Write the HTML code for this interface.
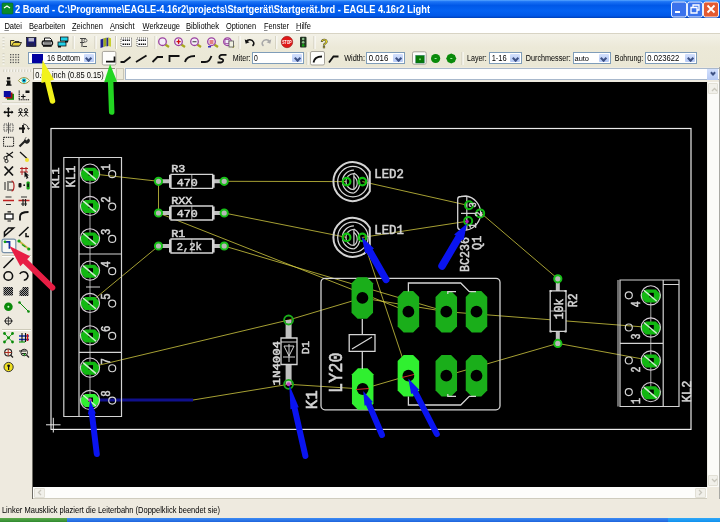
<!DOCTYPE html>
<html><head><meta charset="utf-8">
<style>
*{box-sizing:border-box}
html,body{margin:0;padding:0}
body{width:720px;height:522px;overflow:hidden;position:relative;background:#EEEADF;font-family:"Liberation Sans",sans-serif}
.a{position:absolute}
.dd{position:absolute;background:#fff;border:1px solid #7F9DB9}
.dd .ar{position:absolute;right:1px;top:1px;bottom:1px;width:10px;background:linear-gradient(#D3E0FD,#B5C9F5);border-radius:1px}
.dd .ar:after{content:"";position:absolute;left:2.6px;top:2px;width:3.2px;height:3.2px;border-right:2px solid #3E5286;border-bottom:2px solid #3E5286;transform:rotate(45deg)}
</style></head><body>
<div class="a" style="left:0;top:0;width:720px;height:18.3px;background:linear-gradient(#5AA8FF 0%,#1C74F6 9%,#0058E8 30%,#0462F2 60%,#0058E8 88%,#0040B8 100%)"></div>
<div class="a" style="left:0;top:18.3px;width:720px;height:15.6px;background:#FFFFFF;border-bottom:1px solid #D8D4C4"></div>
<div class="a" style="left:0;top:34px;width:720px;height:33px;background:linear-gradient(#F3F1E7,#ECE9D8 40%,#EAE7D5)"></div>
<div class="dd" style="left:28px;top:51.7px;width:67.6px;height:12.799999999999997px"><div class="ar"></div></div>
<div class="a" style="left:32px;top:53.8px;width:11px;height:9px;background:#0000A0"></div>
<div class="dd" style="left:251.9px;top:51.7px;width:52.099999999999994px;height:12.799999999999997px"><div class="ar"></div></div>
<div class="dd" style="left:366.3px;top:51.7px;width:39.0px;height:12.799999999999997px"><div class="ar"></div></div>
<div class="dd" style="left:488.7px;top:51.7px;width:33.80000000000001px;height:12.799999999999997px"><div class="ar"></div></div>
<div class="dd" style="left:572.5px;top:51.7px;width:38.10000000000002px;height:12.799999999999997px"><div class="ar"></div></div>
<div class="dd" style="left:644.9px;top:51.7px;width:52.39999999999998px;height:12.799999999999997px"><div class="ar"></div></div>
<!-- coordinate row -->
<div class="a" style="left:32.5px;top:67.8px;width:82.5px;height:12.7px;background:#F6F5EF;border-top:1px solid #8E8B7E;border-left:1px solid #8E8B7E;border-bottom:1px solid #fff"></div>
<div class="a" style="left:115.8px;top:67.8px;width:8.4px;height:12.7px;background:#ECE9D8;border:1px solid #C8C5B5"></div>
<div class="a" style="left:125px;top:67.8px;width:595px;height:12.7px;background:#fff;border:1px solid #A8B8CC"></div>
<div class="a" style="left:707px;top:68.5px;width:11px;height:11px;background:linear-gradient(#D3E0FD,#B5C9F5)"></div>
<div class="a" style="left:710.5px;top:71px;width:4px;height:4px;border-right:2px solid #3E5286;border-bottom:2px solid #3E5286;transform:rotate(45deg)"></div>
<!-- canvas -->
<div class="a" style="left:33px;top:81.8px;width:674px;height:404.8px;background:#000"></div>
<div class="a" style="left:31.5px;top:81.8px;width:1.5px;height:417px;background:#6E6C64"></div>
<!-- v scrollbar -->
<div class="a" style="left:707px;top:81.8px;width:11.5px;height:404.8px;background:#FBFBF8;border-left:1px solid #EEEDE6"></div>
<div class="a" style="left:708px;top:82.5px;width:10px;height:11px;background:#F1F0EA;border:1px solid #E2E0D6;border-radius:1px"></div>
<div class="a" style="left:708px;top:475px;width:10px;height:11px;background:#F1F0EA;border:1px solid #E2E0D6;border-radius:1px"></div>
<!-- h scrollbar -->

<div class="a" style="left:33px;top:486.6px;width:674px;height:12px;background:#FDFDFB;border-bottom:1px solid #CFCCBE"></div>
<div class="a" style="left:34px;top:487.5px;width:11px;height:10px;background:#F1F0EA;border:1px solid #E2E0D6;border-radius:1px"></div>
<div class="a" style="left:695px;top:487.5px;width:11px;height:10px;background:#F1F0EA;border:1px solid #E2E0D6;border-radius:1px"></div>
<div class="a" style="left:718.6px;top:67px;width:1.4px;height:432px;background:#A9A9A4"></div>
<!-- taskbar -->
<div class="a" style="left:0;top:518.3px;width:67px;height:4px;background:linear-gradient(#5DAA4C,#2E8A2E)"></div>
<div class="a" style="left:67px;top:518.3px;width:601px;height:4px;background:linear-gradient(#3C8CF4,#1E64DC)"></div>
<div class="a" style="left:668px;top:518.3px;width:52px;height:4px;background:linear-gradient(#30A8F8,#1090EE)"></div>
<svg class="a" style="left:0;top:0;will-change:transform" width="720" height="522" viewBox="0 0 720 522">
<defs><clipPath id="cv"><rect x="33" y="81.8" width="674" height="404.8"/></clipPath></defs>
<text x="15" y="12.6" font-family="Liberation Sans" font-size="10.00" font-weight="bold" fill="#fff" textLength="415" lengthAdjust="spacingAndGlyphs">2 Board - C:\Programme\EAGLE-4.16r2\projects\Startgerät\Startgerät.brd - EAGLE 4.16r2 Light</text>
<rect x="2" y="3" width="11" height="11" rx="1" fill="#0A8A2A" stroke="#063" stroke-width="0.6"/><path d="M4 8L7 6L10 8" stroke="#fff" stroke-width="1.2" fill="none"/>
<rect x="671.5" y="2" width="15" height="15" rx="2" fill="#3A72EC" stroke="#fff" stroke-width="0.9"/>
<rect x="675.0" y="11" width="5" height="2" fill="#fff"/>
<rect x="687.5" y="2" width="15" height="15" rx="2" fill="#3A72EC" stroke="#fff" stroke-width="0.9"/>
<path d="M693.0 7V5h6v5h-2M691.0 7.5h6v5.5h-6z" fill="none" stroke="#fff" stroke-width="1.3"/>
<rect x="703.5" y="2" width="15" height="15" rx="2" fill="#E35A32" stroke="#fff" stroke-width="0.9"/>
<path d="M707.5 5.5L714.5 12.5M714.5 5.5L707.5 12.5" stroke="#fff" stroke-width="1.8"/>
<text x="4.4" y="28.7" font-family="Liberation Sans" font-size="8.26" font-weight="normal" fill="#000" textLength="17.6" lengthAdjust="spacingAndGlyphs">Datei</text>
<text x="29" y="28.7" font-family="Liberation Sans" font-size="8.26" font-weight="normal" fill="#000" textLength="36.5" lengthAdjust="spacingAndGlyphs">Bearbeiten</text>
<text x="72" y="28.7" font-family="Liberation Sans" font-size="8.26" font-weight="normal" fill="#000" textLength="31" lengthAdjust="spacingAndGlyphs">Zeichnen</text>
<text x="110" y="28.7" font-family="Liberation Sans" font-size="8.26" font-weight="normal" fill="#000" textLength="24.5" lengthAdjust="spacingAndGlyphs">Ansicht</text>
<text x="142.5" y="28.7" font-family="Liberation Sans" font-size="8.26" font-weight="normal" fill="#000" textLength="37.5" lengthAdjust="spacingAndGlyphs">Werkzeuge</text>
<text x="186" y="28.7" font-family="Liberation Sans" font-size="8.26" font-weight="normal" fill="#000" textLength="33" lengthAdjust="spacingAndGlyphs">Bibliothek</text>
<text x="226" y="28.7" font-family="Liberation Sans" font-size="8.26" font-weight="normal" fill="#000" textLength="30" lengthAdjust="spacingAndGlyphs">Optionen</text>
<text x="264" y="28.7" font-family="Liberation Sans" font-size="8.26" font-weight="normal" fill="#000" textLength="25" lengthAdjust="spacingAndGlyphs">Fenster</text>
<text x="296" y="28.7" font-family="Liberation Sans" font-size="8.26" font-weight="normal" fill="#000" textLength="15" lengthAdjust="spacingAndGlyphs">Hilfe</text>
<rect x="4.4" y="30" width="4.5" height="0.7" fill="#555"/>
<rect x="33" y="30" width="3.6" height="0.7" fill="#555"/>
<rect x="72" y="30" width="4.2" height="0.7" fill="#555"/>
<rect x="110" y="30" width="4.2" height="0.7" fill="#555"/>
<rect x="142.5" y="30" width="6" height="0.7" fill="#555"/>
<rect x="186" y="30" width="4" height="0.7" fill="#555"/>
<rect x="226" y="30" width="4.5" height="0.7" fill="#555"/>
<rect x="264" y="30" width="3.5" height="0.7" fill="#555"/>
<rect x="296" y="30" width="4" height="0.7" fill="#555"/>
<text x="232.75" y="61.1" font-family="Liberation Sans" font-size="8.41" font-weight="normal" fill="#000" textLength="17.8" lengthAdjust="spacingAndGlyphs">Miter:</text>
<text x="344.2" y="61.3" font-family="Liberation Sans" font-size="8.41" font-weight="normal" fill="#000" textLength="20.8" lengthAdjust="spacingAndGlyphs">Width:</text>
<text x="467" y="61.3" font-family="Liberation Sans" font-size="8.41" font-weight="normal" fill="#000" textLength="19.7" lengthAdjust="spacingAndGlyphs">Layer:</text>
<text x="525.8" y="61.3" font-family="Liberation Sans" font-size="8.41" font-weight="normal" fill="#000" textLength="45" lengthAdjust="spacingAndGlyphs">Durchmesser:</text>
<text x="614.8" y="61.3" font-family="Liberation Sans" font-size="8.41" font-weight="normal" fill="#000" textLength="28.3" lengthAdjust="spacingAndGlyphs">Bohrung:</text>
<text x="46.9" y="61.1" font-family="Liberation Sans" font-size="9.13" font-weight="normal" fill="#000" textLength="33.3" lengthAdjust="spacingAndGlyphs">16 Bottom</text>
<text x="254" y="61.1" font-family="Liberation Sans" font-size="8.99" font-weight="normal" fill="#000" textLength="3.8" lengthAdjust="spacingAndGlyphs">0</text>
<text x="368.7" y="61.1" font-family="Liberation Sans" font-size="8.99" font-weight="normal" fill="#000" textLength="19.6" lengthAdjust="spacingAndGlyphs">0.016</text>
<text x="491.7" y="61.1" font-family="Liberation Sans" font-size="8.99" font-weight="normal" fill="#000" textLength="15" lengthAdjust="spacingAndGlyphs">1-16</text>
<text x="574.5" y="61.1" font-family="Liberation Sans" font-size="7.25" font-weight="normal" fill="#000" textLength="14.5" lengthAdjust="spacingAndGlyphs">auto</text>
<text x="647.3" y="61.1" font-family="Liberation Sans" font-size="8.99" font-weight="normal" fill="#000" textLength="31.9" lengthAdjust="spacingAndGlyphs">0.023622</text>
<text x="35.3" y="77.8" font-family="Liberation Sans" font-size="9.28" font-weight="normal" fill="#000" textLength="68.4" lengthAdjust="spacingAndGlyphs">0.05 inch (0.85 0.15)</text>
<text x="1.9" y="512.8" font-family="Liberation Sans" font-size="8.99" font-weight="normal" fill="#000" textLength="218" lengthAdjust="spacingAndGlyphs">Linker Mausklick plaziert die Leiterbahn (Doppelklick beendet sie)</text>
<rect x="2.5" y="37.5" width="2" height="1" fill="#C2BFB0"/><rect x="2.5" y="38.5" width="2" height="1" fill="#fff"/>
<rect x="2.5" y="40.5" width="2" height="1" fill="#C2BFB0"/><rect x="2.5" y="41.5" width="2" height="1" fill="#fff"/>
<rect x="2.5" y="43.5" width="2" height="1" fill="#C2BFB0"/><rect x="2.5" y="44.5" width="2" height="1" fill="#fff"/>
<rect x="2.5" y="46.5" width="2" height="1" fill="#C2BFB0"/><rect x="2.5" y="47.5" width="2" height="1" fill="#fff"/>
<rect x="2.5" y="53.5" width="2" height="1" fill="#C2BFB0"/><rect x="2.5" y="54.5" width="2" height="1" fill="#fff"/>
<rect x="2.5" y="56.5" width="2" height="1" fill="#C2BFB0"/><rect x="2.5" y="57.5" width="2" height="1" fill="#fff"/>
<rect x="2.5" y="59.5" width="2" height="1" fill="#C2BFB0"/><rect x="2.5" y="60.5" width="2" height="1" fill="#fff"/>
<rect x="2.5" y="62.5" width="2" height="1" fill="#C2BFB0"/><rect x="2.5" y="63.5" width="2" height="1" fill="#fff"/>
<path d="M10.5 40.5h3.5l1 1h4v4.5h-8.5z" fill="#F2E060" stroke="#222" stroke-width="0.9"/><path d="M11.5 46l2-3.5h8l-2 3.5z" fill="#E6D040" stroke="#222" stroke-width="0.9"/>
<rect x="26.5" y="37.5" width="9.5" height="9" fill="#1A1A70" stroke="#000" stroke-width="0.6"/><rect x="28.5" y="38" width="5.5" height="3.5" fill="#B8B8D0"/><rect x="28.5" y="43" width="5.5" height="3.5" fill="#202050"/>
<path d="M44.5 41V38h5.5l1.5 1.5V41" fill="#fff" stroke="#111" stroke-width="1"/><rect x="42.2" y="41" width="10.3" height="4.2" rx="1.5" fill="#E8E8E8" stroke="#111" stroke-width="1.3"/><rect x="43" y="45" width="8.7" height="1.8" fill="#111"/><rect x="43.5" y="42.5" width="7.5" height="0.9" fill="#111"/>
<rect x="60.5" y="37" width="7.5" height="4" fill="#22D0E8" stroke="#111" stroke-width="0.8"/><rect x="58" y="42" width="8" height="4" fill="#22D0E8" stroke="#111" stroke-width="0.8"/><rect x="58" y="46" width="3" height="1.5" fill="#111"/><rect x="65" y="41" width="3" height="1.5" fill="#111"/>
<rect x="72.7" y="36" width="1" height="13" fill="#CDCAB9"/><rect x="73.7" y="36" width="1" height="13" fill="#FFFFFF"/>
<rect x="94.5" y="36" width="1" height="13" fill="#CDCAB9"/><rect x="95.5" y="36" width="1" height="13" fill="#FFFFFF"/>
<rect x="115" y="36" width="1" height="13" fill="#CDCAB9"/><rect x="116" y="36" width="1" height="13" fill="#FFFFFF"/>
<rect x="154.5" y="36" width="1" height="13" fill="#CDCAB9"/><rect x="155.5" y="36" width="1" height="13" fill="#FFFFFF"/>
<rect x="238.5" y="36" width="1" height="13" fill="#CDCAB9"/><rect x="239.5" y="36" width="1" height="13" fill="#FFFFFF"/>
<rect x="275.3" y="36" width="1" height="13" fill="#CDCAB9"/><rect x="276.3" y="36" width="1" height="13" fill="#FFFFFF"/>
<rect x="313.5" y="36" width="1" height="13" fill="#CDCAB9"/><rect x="314.5" y="36" width="1" height="13" fill="#FFFFFF"/>
<path d="M80 38.5h6M82 38.5v8.5M80 42.5h4.5M83 46.5h4" stroke="#444" stroke-width="1.1" fill="none"/><circle cx="85.5" cy="40.5" r="1.5" fill="none" stroke="#555" stroke-width="0.9"/>
<path d="M100.5 39.5l3 -1v8.5l-3 1z" fill="#1E1E90"/><path d="M103.5 38.5l3 -1v8.5l-3 1z" fill="#9AA81E"/><path d="M106.5 38l2 -0.5v8.5l-2 .5z" fill="#2A2A8A"/><path d="M108.5 37.5l2.5 .8v8.5l-2.5-.8z" fill="#C8D030"/>
<rect x="121" y="38" width="10.5" height="8.5" fill="#fff" stroke="#333" stroke-width="0.8" stroke-dasharray="1 1"/><path d="M122.5 40.2h7.5M122.5 44.2h7.5" stroke="#111" stroke-width="1.4" stroke-dasharray="1.5 .7"/>
<rect x="137" y="38" width="10.5" height="8.5" fill="#fff" stroke="#333" stroke-width="0.8" stroke-dasharray="1 1"/><path d="M138.5 40.2h7.5M138.5 44.2h7.5" stroke="#111" stroke-width="1.4" stroke-dasharray="1.5 .7"/>
<line x1="165.3" y1="44.5" x2="169" y2="47" stroke="#A8A820" stroke-width="2.2"/>
<circle cx="162.5" cy="41.7" r="3.8" fill="#F4EEF8" stroke="#9A40A0" stroke-width="1.3"/>
<rect x="162.5" y="41.7" width="0" height="0"/>
<line x1="181.3" y1="44.5" x2="185" y2="47" stroke="#A8A820" stroke-width="2.2"/>
<circle cx="178.5" cy="41.7" r="3.8" fill="#F4EEF8" stroke="#9A40A0" stroke-width="1.3"/>
<path d="M178.5 39.7v4M159 0" stroke="#D01010" stroke-width="1.2"/>
<path d="M176.5 41.7h4.2M178.6 39.6v4.2" stroke="#D01010" stroke-width="1.2"/>
<line x1="197.3" y1="44.5" x2="201" y2="47" stroke="#A8A820" stroke-width="2.2"/>
<circle cx="194.5" cy="41.7" r="3.8" fill="#F4EEF8" stroke="#9A40A0" stroke-width="1.3"/>
<path d="M192.5 41.7h4" stroke="#555" stroke-width="1.2"/>
<line x1="214.3" y1="44.5" x2="218" y2="47" stroke="#A8A820" stroke-width="2.2"/>
<circle cx="211.5" cy="41.7" r="3.8" fill="#F4EEF8" stroke="#9A40A0" stroke-width="1.3"/>
<path d="M209.5 41h4M209.5 43h4" stroke="#D01010" stroke-width="1"/>
<rect x="208" y="46" width="3" height="1.5" fill="#3030C0"/>
<line x1="230.3" y1="44.5" x2="234" y2="47" stroke="#A8A820" stroke-width="2.2"/>
<circle cx="227.5" cy="41.7" r="3.8" fill="#F4EEF8" stroke="#9A40A0" stroke-width="1.3"/>
<rect x="225" y="39.5" width="4" height="4" fill="none" stroke="#9A40A0" stroke-width="0.8"/>
<rect x="229" y="41" width="4.5" height="6" fill="#F0F0E0" stroke="#555" stroke-width="0.8"/>
<path d="M246 41.5c2-2.5 6-2.5 7.5 0.5c0.8 1.6 0 3-1 3.8" fill="none" stroke="#111" stroke-width="1.5"/><path d="M244.7 39.3l1 4.5l3.8-1.5z" fill="#111"/>
<path d="M270 41.5c-2-2.5-6-2.5-7.5 0.5c-.8 1.6 0 3 1 3.8" fill="none" stroke="#A8A8A8" stroke-width="1.5"/><path d="M271.3 39.3l-1 4.5l-3.8-1.5z" fill="#A8A8A8"/>
<circle cx="287" cy="42" r="5.7" fill="#E01818" stroke="#901010" stroke-width="0.6"/><text x="282.3" y="44" font-family="Liberation Sans" font-size="4.6" font-weight="bold" fill="#fff" textLength="9.4" lengthAdjust="spacingAndGlyphs">STOP</text>
<rect x="300" y="36.8" width="6.5" height="10.8" rx="1" fill="#223322"/><circle cx="303.2" cy="39" r="1.3" fill="#8AC08A"/><circle cx="303.2" cy="42.2" r="1.3" fill="#8AC08A"/><circle cx="303.2" cy="45.4" r="1.3" fill="#10A010"/>
<text x="320.5" y="47.5" font-family="Liberation Sans" font-size="13" font-weight="bold" fill="#F0E020" stroke="#333" stroke-width="0.5" textLength="7.5" lengthAdjust="spacingAndGlyphs">?</text>
<rect x="10.0" y="54.0" width="1.3" height="1.3" fill="#555"/>
<rect x="12.6" y="54.0" width="1.3" height="1.3" fill="#555"/>
<rect x="15.2" y="54.0" width="1.3" height="1.3" fill="#555"/>
<rect x="17.8" y="54.0" width="1.3" height="1.3" fill="#555"/>
<rect x="10.0" y="56.6" width="1.3" height="1.3" fill="#555"/>
<rect x="12.6" y="56.6" width="1.3" height="1.3" fill="#555"/>
<rect x="15.2" y="56.6" width="1.3" height="1.3" fill="#555"/>
<rect x="17.8" y="56.6" width="1.3" height="1.3" fill="#555"/>
<rect x="10.0" y="59.2" width="1.3" height="1.3" fill="#555"/>
<rect x="12.6" y="59.2" width="1.3" height="1.3" fill="#555"/>
<rect x="15.2" y="59.2" width="1.3" height="1.3" fill="#555"/>
<rect x="17.8" y="59.2" width="1.3" height="1.3" fill="#555"/>
<rect x="10.0" y="61.8" width="1.3" height="1.3" fill="#555"/>
<rect x="12.6" y="61.8" width="1.3" height="1.3" fill="#555"/>
<rect x="15.2" y="61.8" width="1.3" height="1.3" fill="#555"/>
<rect x="17.8" y="61.8" width="1.3" height="1.3" fill="#555"/>
<rect x="102.3" y="51.4" width="13.6" height="13.6" rx="1.5" fill="#FDFDFB" stroke="#A6A39A" stroke-width="1"/>
<path d="M106 61.6h8.5v-5" fill="none" stroke="#111" stroke-width="1.7"/>
<path d="M120.5 62h3.5l6.5-5" fill="none" stroke="#111" stroke-width="1.8"/>
<path d="M136 62l10.5-6.5" fill="none" stroke="#111" stroke-width="1.8"/>
<path d="M152.5 62l5-5h5.5" fill="none" stroke="#111" stroke-width="1.8"/>
<path d="M169.5 62v-6h10" fill="none" stroke="#111" stroke-width="1.8"/>
<path d="M185 62c1-4 4-6 10-6" fill="none" stroke="#111" stroke-width="1.8"/>
<path d="M201 62h4c4 0 5-2.5 6.5-6" fill="none" stroke="#111" stroke-width="1.8"/>
<path d="M226.5 54.8H222c-2 0-3 1.5-2.5 3c.5 1 2 1 3 1.5c1.5 .8 .5 3.2-1.5 3.2H217.5" fill="none" stroke="#111" stroke-width="1.8"/>
<rect x="310.5" y="51.5" width="14" height="13.5" rx="1.5" fill="#FDFDFB" stroke="#A6A39A" stroke-width="1"/>
<path d="M313.5 62.5c0.5-3.5 3-6 8.5-6" fill="none" stroke="#111" stroke-width="1.8"/>
<path d="M329 62.5l4.5-6h5" fill="none" stroke="#111" stroke-width="1.8"/>
<rect x="306.5" y="52" width="1" height="13" fill="#CDCAB9"/><rect x="307.5" y="52" width="1" height="13" fill="#FFFFFF"/>
<rect x="461.5" y="52" width="1" height="13" fill="#CDCAB9"/><rect x="462.5" y="52" width="1" height="13" fill="#FFFFFF"/>
<rect x="412.5" y="51.8" width="13.7" height="12.4" rx="1.5" fill="#FDFDFB" stroke="#A6A39A" stroke-width="1"/>
<rect x="415.8" y="55.5" width="8.4" height="7.5" fill="#087A08" stroke="#064" stroke-width="0.5"/><rect x="419" y="58.5" width="2" height="1.6" fill="#6c6"/>
<circle cx="435.6" cy="58.5" r="4.6" fill="#0A8A0A"/><rect x="434.6" y="58" width="2" height="1" fill="#9e9"/>
<path d="M456.25 58.50L454.79 62.04L451.25 63.50L447.71 62.04L446.25 58.50L447.71 54.96L451.25 53.50L454.79 54.96Z" fill="#0A8A0A"/><rect x="450.3" y="58" width="2" height="1" fill="#9e9"/>
<rect x="3.5" y="69.5" width="1" height="2.5" fill="#C2BFB0"/><rect x="4.5" y="69.5" width="1" height="2.5" fill="#fff"/>
<rect x="6.5" y="69.5" width="1" height="2.5" fill="#C2BFB0"/><rect x="7.5" y="69.5" width="1" height="2.5" fill="#fff"/>
<rect x="9.5" y="69.5" width="1" height="2.5" fill="#C2BFB0"/><rect x="10.5" y="69.5" width="1" height="2.5" fill="#fff"/>
<rect x="12.5" y="69.5" width="1" height="2.5" fill="#C2BFB0"/><rect x="13.5" y="69.5" width="1" height="2.5" fill="#fff"/>
<rect x="15.5" y="69.5" width="1" height="2.5" fill="#C2BFB0"/><rect x="16.5" y="69.5" width="1" height="2.5" fill="#fff"/>
<rect x="18.5" y="69.5" width="1" height="2.5" fill="#C2BFB0"/><rect x="19.5" y="69.5" width="1" height="2.5" fill="#fff"/>
<rect x="21.5" y="69.5" width="1" height="2.5" fill="#C2BFB0"/><rect x="22.5" y="69.5" width="1" height="2.5" fill="#fff"/>
<rect x="24.5" y="69.5" width="1" height="2.5" fill="#C2BFB0"/><rect x="25.5" y="69.5" width="1" height="2.5" fill="#fff"/>
<rect x="27.5" y="69.5" width="1" height="2.5" fill="#C2BFB0"/><rect x="28.5" y="69.5" width="1" height="2.5" fill="#fff"/>
<rect x="30.5" y="69.5" width="1" height="2.5" fill="#C2BFB0"/><rect x="31.5" y="69.5" width="1" height="2.5" fill="#fff"/>
<rect x="7" y="77.2" width="3.2" height="2.2" fill="#111"/><path d="M6.5 80.5h4v4h1v1.3h-5.5v-1.3h1v-2.7h-.5z" fill="#111"/>
<path d="M18.5 80.6c3-4 8-4 11 0c-3 4-8 4-11 0z" fill="#FFFCE8" stroke="#8A8A30" stroke-width="0.9"/><circle cx="24" cy="80.6" r="2.4" fill="#20C8D8"/><circle cx="24" cy="80.6" r="1" fill="#114"/>
<rect x="7" y="93.8" width="7" height="6" fill="#109010"/><rect x="5.5" y="92.5" width="7" height="6" fill="#A01010"/><rect x="3.8" y="91" width="7" height="6" fill="#0A0AA0"/>
<path d="M19.2 90.5v9.3h10" fill="none" stroke="#111" stroke-width="1.1" stroke-dasharray="1.2 .6"/><path d="M21 96.5h4.5M23.2 94.3v4.5" stroke="#111" stroke-width="1.1"/><rect x="25.5" y="90.5" width="4" height="2.5" fill="#111"/>
<rect x="2" y="102.4" width="29" height="1" fill="#CDCAB9"/><rect x="2" y="103.4" width="29" height="1" fill="#fff"/>
<rect x="2" y="255" width="29" height="1" fill="#CDCAB9"/><rect x="2" y="256" width="29" height="1" fill="#fff"/>
<rect x="2" y="329" width="29" height="1" fill="#CDCAB9"/><rect x="2" y="330" width="29" height="1" fill="#fff"/>
<path d="M8.4 107.8v9M4 112.3h9" stroke="#111" stroke-width="1.4"/><path d="M8.4 107.3l-1.8 2h3.6zM8.4 117.3l-1.8-2h3.6zM3.3 112.3l2-1.8v3.6zM13.5 112.3l-2-1.8v3.6z" fill="#111"/>
<circle cx="20.5" cy="110" r="1.5" fill="none" stroke="#111" stroke-width="0.9"/><path d="M18.2 112.5h4.6M20.5 111.5v2.5l-2 2.5M20.5 114l2 2.5" stroke="#111" stroke-width="0.9" fill="none"/>
<circle cx="26" cy="110" r="1.5" fill="none" stroke="#111" stroke-width="0.9"/><path d="M23.7 112.5h4.6M26 111.5v2.5l-2 2.5M26 114l2 2.5" stroke="#111" stroke-width="0.9" fill="none"/>
<path d="M4 124h3v7h-3zM10 124h3v7h-3z" fill="none" stroke="#555" stroke-width="1" stroke-dasharray="1.3 .7"/><path d="M8.5 122.5v11" stroke="#333" stroke-width="0.8"/>
<path d="M23 125v8M19 128.5h6" stroke="#111" stroke-width="1.8"/><path d="M23 124c3 0 5 2 5.5 5" fill="none" stroke="#333" stroke-width="1"/><path d="M28.5 130l-1.5-2h3z" fill="#333"/>
<rect x="3.6" y="137.3" width="10" height="9" fill="none" stroke="#111" stroke-width="1" stroke-dasharray="1.4 .8"/>
<path d="M19.5 146.5l6-6" stroke="#222" stroke-width="2.2"/><path d="M24.5 139.5a2.8 2.8 0 1 0 4 -1l-2 2l-1.5 -1.5l2-2a2.8 2.8 0 0 0 -2.5 2.5z" fill="#222"/>
<path d="M6 157l7-5M6.5 153l6.5 4.5" stroke="#111" stroke-width="1.1"/><circle cx="5.5" cy="158" r="1.6" fill="none" stroke="#111" stroke-width="0.9"/><circle cx="6.5" cy="161" r="1.6" fill="none" stroke="#111" stroke-width="0.9"/>
<path d="M20 152l7 6.5" stroke="#111" stroke-width="1.2"/><circle cx="27" cy="160" r="2" fill="#F0E030"/>
<path d="M4.5 166.5l8.5 9M13 166.5l-8.5 9" stroke="#111" stroke-width="1.7"/>
<path d="M20 168.5h8M20 172h8M22 167v8M26 167v5" stroke="#B02020" stroke-width="1"/><path d="M24.5 172l3.5 4.5l-1.8 0.2l1 2l-.8 .3" fill="#111"/><path d="M24.5 171.5l0 6l1.5-1.5l1.5 2.5l1-.5l-1.5-2.5h2z" fill="#111"/>
<path d="M5 182v8M8 181v10M9 182h4M9 190h4" stroke="#222" stroke-width="1"/><path d="M11.5 181c2 0 2.5 2 2.5 5s-.5 5-2.5 5" fill="none" stroke="#B02020" stroke-width="1.2"/>
<rect x="18.5" y="183" width="3" height="4.5" rx="1" fill="#111"/><circle cx="24.2" cy="185.2" r="0.9" fill="#111"/><rect x="26.5" y="181.5" width="3.2" height="8" rx="1" fill="#10A010"/><rect x="27.3" y="183.5" width="1.6" height="3.5" fill="#111"/>
<path d="M3 200.5h11M18.5 200.5h11" stroke="#C02020" stroke-width="1.5"/><path d="M5.5 197h6M6 204.5h5M21 197h6M21 204h6" stroke="#333" stroke-width="1.2"/><path d="M23 199v7M25.5 199v7" stroke="#222" stroke-width="1.2"/>
<rect x="5" y="214" width="8" height="5" fill="#fff" stroke="#111" stroke-width="1.3"/><path d="M7.5 211.8h3.5M7.5 221h3.5" stroke="#111" stroke-width="1.2"/>
<path d="M20 220.5v-4c0-3 2.5-4.5 8.5-4.5" fill="none" stroke="#111" stroke-width="1.8"/>
<path d="M4.5 236l9-8h-5l-4 4z" fill="none" stroke="#111" stroke-width="1.6"/>
<path d="M19 236l9.5-9M26 233v3.5h3" fill="none" stroke="#111" stroke-width="1.5"/>
<rect x="2" y="239.2" width="13.8" height="13.5" rx="2" fill="#F8F8F4" stroke="#7890A8" stroke-width="1.2"/>
<path d="M5 241.8h4.5v7" fill="none" stroke="#1030A0" stroke-width="1.8"/><circle cx="5" cy="241.8" r="1.4" fill="#10A010"/>
<path d="M19 241l9.8 8" stroke="#C8B040" stroke-width="1.8"/><circle cx="19" cy="241" r="1.6" fill="#10A010"/><circle cx="28.8" cy="249" r="1.6" fill="#10A010"/><path d="M22 244.5l3.5 2.5" stroke="#10A010" stroke-width="1.2"/>
<path d="M3.5 268l10-10" stroke="#111" stroke-width="1.6"/>
<circle cx="8.3" cy="276" r="4.3" fill="none" stroke="#111" stroke-width="1.6"/>
<path d="M19.8 274a4.3 4.3 0 1 1 4 6.3" fill="none" stroke="#111" stroke-width="1.6"/>
<defs><pattern id="chk" width="2" height="2" patternUnits="userSpaceOnUse"><rect width="1" height="1" fill="#111"/><rect x="1" y="1" width="1" height="1" fill="#111"/><rect x="1" width="1" height="1" fill="#999"/><rect y="1" width="1" height="1" fill="#999"/></pattern></defs>
<rect x="3.5" y="287" width="9.5" height="8.5" fill="url(#chk)"/>
<path d="M19.5 296v-5l3-2v-2h6v9z" fill="url(#chk)"/>
<circle cx="8.4" cy="306.8" r="4.3" fill="#0A8A0A"/><circle cx="8.4" cy="306.8" r="1" fill="#dfd"/>
<path d="M19.5 302.5l9 9" stroke="#0A8A0A" stroke-width="1"/><circle cx="19.5" cy="302.5" r="1.3" fill="#0A8A0A"/><circle cx="28.5" cy="311.5" r="1.3" fill="#0A8A0A"/>
<circle cx="8.4" cy="321" r="3.2" fill="none" stroke="#222" stroke-width="1"/><path d="M8.4 316.5v9M4 321h9" stroke="#222" stroke-width="0.8"/>
<path d="M4.5 333.5l8 8.5M12.5 333.5l-8 8.5" stroke="#10A010" stroke-width="1"/>
<circle cx="4.5" cy="333.5" r="1.4" fill="#0A8A0A"/>
<circle cx="12.5" cy="333.5" r="1.4" fill="#0A8A0A"/>
<circle cx="4.5" cy="342" r="1.4" fill="#0A8A0A"/>
<circle cx="12.5" cy="342" r="1.4" fill="#0A8A0A"/>
<circle cx="8.5" cy="337.8" r="1.4" fill="#0A8A0A"/>
<path d="M19 336h10M19 339.5h10" stroke="#1030C0" stroke-width="1.3"/><path d="M22 333v9M25.5 333v9" stroke="#111" stroke-width="1.1"/><path d="M27.5 334v7" stroke="#D01010" stroke-width="1.5"/><path d="M19 342h6" stroke="#10A010" stroke-width="1.2"/>
<circle cx="8.2" cy="352.5" r="3.5" fill="none" stroke="#222" stroke-width="1.1"/><path d="M8.2 349v7M4.5 352.5h7" stroke="#B03020" stroke-width="1"/><path d="M10.5 355l2.5 2.5" stroke="#222" stroke-width="1.3"/>
<circle cx="24.2" cy="352.5" r="3.3" fill="none" stroke="#222" stroke-width="1"/><path d="M19 351h7M22 353.5h4" stroke="#222" stroke-width="1"/><path d="M26.5 355l2.5 2.5" stroke="#222" stroke-width="1.3"/><circle cx="24.5" cy="354.5" r="1" fill="#10A010"/>
<circle cx="8.6" cy="367" r="4.6" fill="#F0E020" stroke="#222" stroke-width="0.9"/><circle cx="8.6" cy="365.8" r="1.4" fill="#111"/><rect x="8" y="366.5" width="1.2" height="3.5" fill="#111"/>
<path d="M712 91l2.5-2.5l2.5 2.5" fill="none" stroke="#C8C6BC" stroke-width="1.3"/>
<path d="M712 479l2.5 2.5l2.5-2.5" fill="none" stroke="#C8C6BC" stroke-width="1.3"/>
<path d="M41 490l-2.5 2.5l2.5 2.5" fill="none" stroke="#C8C6BC" stroke-width="1.3"/>
<path d="M699 490l2.5 2.5l-2.5 2.5" fill="none" stroke="#C8C6BC" stroke-width="1.3"/>
<g clip-path="url(#cv)">
<rect x="51" y="128.5" width="640" height="300.9" fill="none" stroke="#EAEAEA" stroke-width="1.2"/>
<path d="M46 424.8H60.5M53.3 417.8V432.5" stroke="#EAEAEA" stroke-width="1"/>
<line x1="90" y1="173.6" x2="158.5" y2="181.3" stroke="#DCD444" stroke-width="0.75"/>
<line x1="158.5" y1="181.3" x2="158.5" y2="213" stroke="#DCD444" stroke-width="0.75"/>
<line x1="224.2" y1="181.3" x2="346.6" y2="181.6" stroke="#DCD444" stroke-width="0.75"/>
<line x1="224.2" y1="213" x2="346.6" y2="237.4" stroke="#DCD444" stroke-width="0.75"/>
<line x1="158.5" y1="213" x2="408.4" y2="311.7" stroke="#DCD444" stroke-width="0.75"/>
<line x1="224.2" y1="246" x2="446.3" y2="311.7" stroke="#DCD444" stroke-width="0.75"/>
<line x1="158.5" y1="246" x2="90" y2="302.7" stroke="#DCD444" stroke-width="0.75"/>
<line x1="90" y1="367.3" x2="288.6" y2="320" stroke="#DCD444" stroke-width="0.75"/>
<line x1="288.6" y1="320" x2="362.3" y2="298" stroke="#DCD444" stroke-width="0.75"/>
<line x1="362.3" y1="298" x2="446.3" y2="311.7" stroke="#DCD444" stroke-width="0.75"/>
<line x1="446.3" y1="311.7" x2="650.8" y2="327.5" stroke="#DCD444" stroke-width="0.75"/>
<line x1="193" y1="400" x2="288.6" y2="384.3" stroke="#DCD444" stroke-width="0.75"/>
<line x1="288.6" y1="384.3" x2="362.7" y2="389" stroke="#DCD444" stroke-width="0.75"/>
<line x1="362.7" y1="389" x2="408.4" y2="375.7" stroke="#DCD444" stroke-width="0.75"/>
<line x1="362.4" y1="237.4" x2="408.4" y2="375.7" stroke="#DCD444" stroke-width="0.75"/>
<line x1="362.4" y1="181.6" x2="466.4" y2="205" stroke="#DCD444" stroke-width="0.75"/>
<line x1="362.4" y1="237.4" x2="466.4" y2="221.4" stroke="#DCD444" stroke-width="0.75"/>
<line x1="481" y1="213.2" x2="557.8" y2="278.8" stroke="#DCD444" stroke-width="0.75"/>
<line x1="557.8" y1="343.4" x2="650.8" y2="360.5" stroke="#DCD444" stroke-width="0.75"/>
<line x1="446.3" y1="375.7" x2="557.8" y2="343.4" stroke="#DCD444" stroke-width="0.75"/>
<line x1="90" y1="400" x2="193" y2="400" stroke="#10108C" stroke-width="3"/>
<path d="M63.8 157.5H121.5V416.5H63.8ZM79 157.5V416.5M79 254H121.5M79 352.3H121.5" fill="none" stroke="#D4D4D4" stroke-width="1.2"/>
<line x1="90" y1="173.6" x2="90" y2="400" stroke="#D4D4D4" stroke-width="0.8"/>
<line x1="86" y1="287" x2="100" y2="287" stroke="#D4D4D4" stroke-width="1"/>
<path d="M85.0 167.7H95.0L100.0 172.7V175.7L95.0 180.7H85.0L80.0 175.7V172.7Z" fill="#12B812"/>
<circle cx="90" cy="173.6" r="9.6" fill="none" stroke="#D4CCD4" stroke-width="1.1"/>
<rect x="88.5" y="171.1" width="4.5" height="4.5" fill="#000"/>
<line x1="83" y1="168.6" x2="96" y2="179.6" stroke="#D0F0D0" stroke-width="1.5"/>
<circle cx="112.2" cy="174.2" r="3.5" fill="none" stroke="#D4D4D4" stroke-width="1.2"/>
<text x="110.3" y="170.4" font-family="Liberation Mono" font-size="11.94" fill="#D4D4D4" stroke="#D4D4D4" stroke-width="0.55" textLength="6.4" lengthAdjust="spacingAndGlyphs" transform="rotate(-90 110.3 170.4)">1</text>
<path d="M85.0 200.04H95.0L100.0 205.04V208.04L95.0 213.04H85.0L80.0 208.04V205.04Z" fill="#12B812"/>
<circle cx="90" cy="205.94" r="9.6" fill="none" stroke="#D4CCD4" stroke-width="1.1"/>
<rect x="88.5" y="203.44" width="4.5" height="4.5" fill="#000"/>
<line x1="83" y1="200.94" x2="96" y2="211.94" stroke="#D0F0D0" stroke-width="1.5"/>
<circle cx="112.2" cy="206.54" r="3.5" fill="none" stroke="#D4D4D4" stroke-width="1.2"/>
<text x="110.3" y="202.74" font-family="Liberation Mono" font-size="11.94" fill="#D4D4D4" stroke="#D4D4D4" stroke-width="0.55" textLength="6.4" lengthAdjust="spacingAndGlyphs" transform="rotate(-90 110.3 202.74)">2</text>
<path d="M85.0 232.38H95.0L100.0 237.38V240.38L95.0 245.38H85.0L80.0 240.38V237.38Z" fill="#12B812"/>
<circle cx="90" cy="238.28" r="9.6" fill="none" stroke="#D4CCD4" stroke-width="1.1"/>
<rect x="88.5" y="235.78" width="4.5" height="4.5" fill="#000"/>
<line x1="83" y1="233.28" x2="96" y2="244.28" stroke="#D0F0D0" stroke-width="1.5"/>
<circle cx="112.2" cy="238.88" r="3.5" fill="none" stroke="#D4D4D4" stroke-width="1.2"/>
<text x="110.3" y="235.08" font-family="Liberation Mono" font-size="11.94" fill="#D4D4D4" stroke="#D4D4D4" stroke-width="0.55" textLength="6.4" lengthAdjust="spacingAndGlyphs" transform="rotate(-90 110.3 235.08)">3</text>
<path d="M85.0 264.72H95.0L100.0 269.72V272.72L95.0 277.72H85.0L80.0 272.72V269.72Z" fill="#12B812"/>
<circle cx="90" cy="270.62" r="9.6" fill="none" stroke="#D4CCD4" stroke-width="1.1"/>
<rect x="88.5" y="268.12" width="4.5" height="4.5" fill="#000"/>
<line x1="83" y1="265.62" x2="96" y2="276.62" stroke="#D0F0D0" stroke-width="1.5"/>
<circle cx="112.2" cy="271.22" r="3.5" fill="none" stroke="#D4D4D4" stroke-width="1.2"/>
<text x="110.3" y="267.42" font-family="Liberation Mono" font-size="11.94" fill="#D4D4D4" stroke="#D4D4D4" stroke-width="0.55" textLength="6.4" lengthAdjust="spacingAndGlyphs" transform="rotate(-90 110.3 267.42)">4</text>
<path d="M85.0 297.06000000000006H95.0L100.0 302.06000000000006V305.06000000000006L95.0 310.06000000000006H85.0L80.0 305.06000000000006V302.06000000000006Z" fill="#12B812"/>
<circle cx="90" cy="302.96000000000004" r="9.6" fill="none" stroke="#D4CCD4" stroke-width="1.1"/>
<rect x="88.5" y="300.46000000000004" width="4.5" height="4.5" fill="#000"/>
<line x1="83" y1="297.96000000000004" x2="96" y2="308.96000000000004" stroke="#D0F0D0" stroke-width="1.5"/>
<circle cx="112.2" cy="303.56000000000006" r="3.5" fill="none" stroke="#D4D4D4" stroke-width="1.2"/>
<text x="110.3" y="299.76000000000005" font-family="Liberation Mono" font-size="11.94" fill="#D4D4D4" stroke="#D4D4D4" stroke-width="0.55" textLength="6.4" lengthAdjust="spacingAndGlyphs" transform="rotate(-90 110.3 299.76000000000005)">5</text>
<path d="M85.0 329.40000000000003H95.0L100.0 334.40000000000003V337.40000000000003L95.0 342.40000000000003H85.0L80.0 337.40000000000003V334.40000000000003Z" fill="#12B812"/>
<circle cx="90" cy="335.3" r="9.6" fill="none" stroke="#D4CCD4" stroke-width="1.1"/>
<rect x="88.5" y="332.8" width="4.5" height="4.5" fill="#000"/>
<line x1="83" y1="330.3" x2="96" y2="341.3" stroke="#D0F0D0" stroke-width="1.5"/>
<circle cx="112.2" cy="335.90000000000003" r="3.5" fill="none" stroke="#D4D4D4" stroke-width="1.2"/>
<text x="110.3" y="332.1" font-family="Liberation Mono" font-size="11.94" fill="#D4D4D4" stroke="#D4D4D4" stroke-width="0.55" textLength="6.4" lengthAdjust="spacingAndGlyphs" transform="rotate(-90 110.3 332.1)">6</text>
<path d="M85.0 361.74H95.0L100.0 366.74V369.74L95.0 374.74H85.0L80.0 369.74V366.74Z" fill="#12B812"/>
<circle cx="90" cy="367.64" r="9.6" fill="none" stroke="#D4CCD4" stroke-width="1.1"/>
<rect x="88.5" y="365.14" width="4.5" height="4.5" fill="#000"/>
<line x1="83" y1="362.64" x2="96" y2="373.64" stroke="#D0F0D0" stroke-width="1.5"/>
<circle cx="112.2" cy="368.24" r="3.5" fill="none" stroke="#D4D4D4" stroke-width="1.2"/>
<text x="110.3" y="364.44" font-family="Liberation Mono" font-size="11.94" fill="#D4D4D4" stroke="#D4D4D4" stroke-width="0.55" textLength="6.4" lengthAdjust="spacingAndGlyphs" transform="rotate(-90 110.3 364.44)">7</text>
<path d="M85.0 394.08000000000004H95.0L100.0 399.08000000000004V402.08000000000004L95.0 407.08000000000004H85.0L80.0 402.08000000000004V399.08000000000004Z" fill="#30F030"/>
<circle cx="90" cy="399.98" r="9.6" fill="none" stroke="#D4CCD4" stroke-width="1.1"/>
<rect x="88.5" y="397.48" width="4.5" height="4.5" fill="#000"/>
<line x1="83" y1="394.98" x2="96" y2="405.98" stroke="#D0F0D0" stroke-width="1.5"/>
<circle cx="112.2" cy="400.58000000000004" r="3.5" fill="none" stroke="#D4D4D4" stroke-width="1.2"/>
<text x="110.3" y="396.78000000000003" font-family="Liberation Mono" font-size="11.94" fill="#D4D4D4" stroke="#D4D4D4" stroke-width="0.55" textLength="6.4" lengthAdjust="spacingAndGlyphs" transform="rotate(-90 110.3 396.78000000000003)">8</text>
<text x="58.9" y="188.5" font-family="Liberation Mono" font-size="11.79" fill="#D4D4D4" stroke="#D4D4D4" stroke-width="0.55" textLength="21" lengthAdjust="spacingAndGlyphs" transform="rotate(-90 58.9 188.5)">KL1</text>
<text x="75.1" y="187.6" font-family="Liberation Mono" font-size="12.39" fill="#D4D4D4" stroke="#D4D4D4" stroke-width="0.55" textLength="22" lengthAdjust="spacingAndGlyphs" transform="rotate(-90 75.1 187.6)">KL1</text>
<path d="M620 280H679V406.5H620ZM663.2 280V406.5M663.2 284.5H679M620 343.3H663.2" fill="none" stroke="#D4D4D4" stroke-width="1.2"/>
<line x1="650.8" y1="295.3" x2="650.8" y2="392.1" stroke="#D4D4D4" stroke-width="0.8"/>
<path d="M645.8 386.20000000000005H655.8L660.8 391.20000000000005V394.20000000000005L655.8 399.20000000000005H645.8L640.8 394.20000000000005V391.20000000000005Z" fill="#12B812"/>
<circle cx="650.8" cy="392.1" r="9.6" fill="none" stroke="#D4CCD4" stroke-width="1.1"/>
<rect x="649.3" y="389.6" width="4.5" height="4.5" fill="#000"/>
<line x1="643.8" y1="387.1" x2="656.8" y2="398.1" stroke="#D0F0D0" stroke-width="1.5"/>
<circle cx="628.8" cy="392.1" r="3.5" fill="none" stroke="#D4D4D4" stroke-width="1.2"/>
<text x="639.7" y="404.1" font-family="Liberation Mono" font-size="11.94" fill="#D4D4D4" stroke="#D4D4D4" stroke-width="0.55" textLength="6" lengthAdjust="spacingAndGlyphs" transform="rotate(-90 639.7 404.1)">1</text>
<path d="M645.8 354.6H655.8L660.8 359.6V362.6L655.8 367.6H645.8L640.8 362.6V359.6Z" fill="#12B812"/>
<circle cx="650.8" cy="360.5" r="9.6" fill="none" stroke="#D4CCD4" stroke-width="1.1"/>
<rect x="649.3" y="358.0" width="4.5" height="4.5" fill="#000"/>
<line x1="643.8" y1="355.5" x2="656.8" y2="366.5" stroke="#D0F0D0" stroke-width="1.5"/>
<circle cx="628.8" cy="360.5" r="3.5" fill="none" stroke="#D4D4D4" stroke-width="1.2"/>
<text x="639.7" y="372.5" font-family="Liberation Mono" font-size="11.94" fill="#D4D4D4" stroke="#D4D4D4" stroke-width="0.55" textLength="6" lengthAdjust="spacingAndGlyphs" transform="rotate(-90 639.7 372.5)">2</text>
<path d="M645.8 321.6H655.8L660.8 326.6V329.6L655.8 334.6H645.8L640.8 329.6V326.6Z" fill="#12B812"/>
<circle cx="650.8" cy="327.5" r="9.6" fill="none" stroke="#D4CCD4" stroke-width="1.1"/>
<rect x="649.3" y="325.0" width="4.5" height="4.5" fill="#000"/>
<line x1="643.8" y1="322.5" x2="656.8" y2="333.5" stroke="#D0F0D0" stroke-width="1.5"/>
<circle cx="628.8" cy="327.5" r="3.5" fill="none" stroke="#D4D4D4" stroke-width="1.2"/>
<text x="639.7" y="339.5" font-family="Liberation Mono" font-size="11.94" fill="#D4D4D4" stroke="#D4D4D4" stroke-width="0.55" textLength="6" lengthAdjust="spacingAndGlyphs" transform="rotate(-90 639.7 339.5)">3</text>
<path d="M645.8 289.40000000000003H655.8L660.8 294.40000000000003V297.40000000000003L655.8 302.40000000000003H645.8L640.8 297.40000000000003V294.40000000000003Z" fill="#12B812"/>
<circle cx="650.8" cy="295.3" r="9.6" fill="none" stroke="#D4CCD4" stroke-width="1.1"/>
<rect x="649.3" y="292.8" width="4.5" height="4.5" fill="#000"/>
<line x1="643.8" y1="290.3" x2="656.8" y2="301.3" stroke="#D0F0D0" stroke-width="1.5"/>
<circle cx="628.8" cy="295.3" r="3.5" fill="none" stroke="#D4D4D4" stroke-width="1.2"/>
<text x="639.7" y="307.3" font-family="Liberation Mono" font-size="11.94" fill="#D4D4D4" stroke="#D4D4D4" stroke-width="0.55" textLength="6" lengthAdjust="spacingAndGlyphs" transform="rotate(-90 639.7 307.3)">4</text>
<line x1="618" y1="280" x2="618" y2="406.5" stroke="#D4D4D4" stroke-width="1"/>
<text x="691.5" y="402.2" font-family="Liberation Mono" font-size="12.24" fill="#D4D4D4" stroke="#D4D4D4" stroke-width="0.55" textLength="21.6" lengthAdjust="spacingAndGlyphs" transform="rotate(-90 691.5 402.2)">KL2</text>
<line x1="158.5" y1="181.3" x2="224.2" y2="181.3" stroke="#C0C0C0" stroke-width="4"/>
<path d="M171 174.3H212.6V188.3H171Z" fill="#000" stroke="#D4D4D4" stroke-width="1.3"/>
<path d="M170 174.8V187.8M213.6 174.8V187.8" stroke="#D4D4D4" stroke-width="2"/>
<circle cx="158.5" cy="181.3" r="3.6" fill="#B8B8B8" stroke="#18C018" stroke-width="2"/>
<circle cx="224.2" cy="181.3" r="3.6" fill="#B8B8B8" stroke="#18C018" stroke-width="2"/>
<text x="176.8" y="185.5" font-family="Liberation Mono" font-size="11.64" fill="#D4D4D4" stroke="#D4D4D4" stroke-width="0.55" textLength="21" lengthAdjust="spacingAndGlyphs">470</text>
<line x1="191.8" y1="174.3" x2="191.8" y2="188.3" stroke="#D4D4D4" stroke-width="0.8"/>
<text x="171.3" y="171.8" font-family="Liberation Mono" font-size="10.90" fill="#D4D4D4" stroke="#D4D4D4" stroke-width="0.55" textLength="14" lengthAdjust="spacingAndGlyphs">R3</text>
<line x1="158.5" y1="213" x2="224.2" y2="213" stroke="#C0C0C0" stroke-width="4"/>
<path d="M171 206H212.6V220H171Z" fill="#000" stroke="#D4D4D4" stroke-width="1.3"/>
<path d="M170 206.5V219.5M213.6 206.5V219.5" stroke="#D4D4D4" stroke-width="2"/>
<circle cx="158.5" cy="213" r="3.6" fill="#B8B8B8" stroke="#18C018" stroke-width="2"/>
<circle cx="224.2" cy="213" r="3.6" fill="#B8B8B8" stroke="#18C018" stroke-width="2"/>
<text x="176.8" y="217.2" font-family="Liberation Mono" font-size="11.64" fill="#D4D4D4" stroke="#D4D4D4" stroke-width="0.55" textLength="21" lengthAdjust="spacingAndGlyphs">470</text>
<line x1="191.8" y1="206" x2="191.8" y2="220" stroke="#D4D4D4" stroke-width="0.8"/>
<text x="171.3" y="203.5" font-family="Liberation Mono" font-size="10.90" fill="#D4D4D4" stroke="#D4D4D4" stroke-width="0.55" textLength="21" lengthAdjust="spacingAndGlyphs">RXX</text>
<line x1="158.5" y1="246" x2="224.2" y2="246" stroke="#C0C0C0" stroke-width="4"/>
<path d="M171 239H212.6V253H171Z" fill="#000" stroke="#D4D4D4" stroke-width="1.3"/>
<path d="M170 239.5V252.5M213.6 239.5V252.5" stroke="#D4D4D4" stroke-width="2"/>
<circle cx="158.5" cy="246" r="3.6" fill="#B8B8B8" stroke="#18C018" stroke-width="2"/>
<circle cx="224.2" cy="246" r="3.6" fill="#B8B8B8" stroke="#18C018" stroke-width="2"/>
<text x="176.8" y="250.2" font-family="Liberation Mono" font-size="11.64" fill="#D4D4D4" stroke="#D4D4D4" stroke-width="0.55" textLength="25" lengthAdjust="spacingAndGlyphs">2,2k</text>
<line x1="191.8" y1="239" x2="191.8" y2="253" stroke="#D4D4D4" stroke-width="0.8"/>
<text x="171.3" y="236.5" font-family="Liberation Mono" font-size="10.90" fill="#D4D4D4" stroke="#D4D4D4" stroke-width="0.55" textLength="14" lengthAdjust="spacingAndGlyphs">R1</text>
<line x1="557.8" y1="278.8" x2="557.8" y2="343.4" stroke="#C0C0C0" stroke-width="4"/>
<path d="M550.2 290.9H566V331.4H550.2Z" fill="#000" stroke="#D4D4D4" stroke-width="1.3"/>
<path d="M550.7 290V292M565.5 290V292M550.7 330.4V332.4M565.5 330.4V332.4" stroke="#D4D4D4" stroke-width="2"/>
<circle cx="557.8" cy="278.8" r="3.6" fill="#B8B8B8" stroke="#18C018" stroke-width="2"/>
<circle cx="557.8" cy="343.4" r="3.6" fill="#B8B8B8" stroke="#18C018" stroke-width="2"/>
<text x="562.6" y="319.3" font-family="Liberation Mono" font-size="11.94" fill="#D4D4D4" stroke="#D4D4D4" stroke-width="0.55" textLength="20.7" lengthAdjust="spacingAndGlyphs" transform="rotate(-90 562.6 319.3)">10k</text>
<line x1="550.2" y1="311" x2="566" y2="311" stroke="#D4D4D4" stroke-width="0.8"/>
<text x="577.2" y="307.2" font-family="Liberation Mono" font-size="13.43" fill="#D4D4D4" stroke="#D4D4D4" stroke-width="0.55" textLength="13.8" lengthAdjust="spacingAndGlyphs" transform="rotate(-90 577.2 307.2)">R2</text>
<path d="M369.8 171.87 A19.5 19.5 0 1 0 369.8 191.33 Z" fill="none" stroke="#D4D4D4" stroke-width="2"/>
<circle cx="352.9" cy="181.6" r="15.2" fill="none" stroke="#D4D4D4" stroke-width="1.3"/>
<path d="M353.9 170.1A11.5 11.5 0 0 0 353.9 193.1" fill="none" stroke="#D4D4D4" stroke-width="1.2"/>
<path d="M353.9 173.6A8 8 0 0 0 353.9 189.6" fill="none" stroke="#D4D4D4" stroke-width="1.2"/>
<path d="M353.9 173.1A11.5 11.5 0 0 1 353.9 193.1" fill="none" stroke="#D4D4D4" stroke-width="1.2"/>
<path d="M353.9 176.6A8 8 0 0 1 353.9 189.6" fill="none" stroke="#D4D4D4" stroke-width="1.2"/>
<line x1="353.9" y1="173.6" x2="353.9" y2="189.1" stroke="#D4D4D4" stroke-width="1.2"/>
<circle cx="346.6" cy="181.6" r="3.8" fill="none" stroke="#10C010" stroke-width="2.2"/>
<circle cx="362.4" cy="181.6" r="3.8" fill="none" stroke="#10C010" stroke-width="2.2"/>
<text x="374.3" y="178.4" font-family="Liberation Mono" font-size="12.54" fill="#D4D4D4" stroke="#D4D4D4" stroke-width="0.55" textLength="29.5" lengthAdjust="spacingAndGlyphs">LED2</text>
<path d="M369.8 227.67 A19.5 19.5 0 1 0 369.8 247.13 Z" fill="none" stroke="#D4D4D4" stroke-width="2"/>
<circle cx="352.9" cy="237.4" r="15.2" fill="none" stroke="#D4D4D4" stroke-width="1.3"/>
<path d="M353.9 225.9A11.5 11.5 0 0 0 353.9 248.9" fill="none" stroke="#D4D4D4" stroke-width="1.2"/>
<path d="M353.9 229.4A8 8 0 0 0 353.9 245.4" fill="none" stroke="#D4D4D4" stroke-width="1.2"/>
<path d="M353.9 228.9A11.5 11.5 0 0 1 353.9 248.9" fill="none" stroke="#D4D4D4" stroke-width="1.2"/>
<path d="M353.9 232.4A8 8 0 0 1 353.9 245.4" fill="none" stroke="#D4D4D4" stroke-width="1.2"/>
<line x1="353.9" y1="229.4" x2="353.9" y2="244.9" stroke="#D4D4D4" stroke-width="1.2"/>
<circle cx="346.6" cy="237.4" r="3.8" fill="none" stroke="#10C010" stroke-width="2.2"/>
<circle cx="362.4" cy="237.4" r="3.8" fill="none" stroke="#10C010" stroke-width="2.2"/>
<text x="374.3" y="234.20000000000002" font-family="Liberation Mono" font-size="12.54" fill="#D4D4D4" stroke="#D4D4D4" stroke-width="0.55" textLength="29.5" lengthAdjust="spacingAndGlyphs">LED1</text>
<path d="M457.7 199 Q457.7 196.5 461 196.5 L466 196 A17.3 17.3 0 0 1 466 230.2 L461 229.8 Q457.7 229.8 457.7 227 Z" fill="none" stroke="#D4D4D4" stroke-width="1.3"/>
<path d="M461 213.4H475M466.8 196V230" stroke="#D4D4D4" stroke-width="1.2"/>
<circle cx="469" cy="205.2" r="4" fill="none" stroke="#10B810" stroke-width="2"/>
<circle cx="480.2" cy="213.4" r="4" fill="none" stroke="#10B810" stroke-width="2"/>
<circle cx="468.2" cy="221" r="4" fill="none" stroke="#10B810" stroke-width="2"/>
<circle cx="467" cy="221.5" r="1.8" fill="#B020B0"/>
<text x="475.9" y="207.6" font-family="Liberation Mono" font-size="11.19" fill="#D4D4D4" stroke="#D4D4D4" stroke-width="0.55" textLength="5.2" lengthAdjust="spacingAndGlyphs" transform="rotate(-90 475.9 207.6)">3</text>
<text x="481.6" y="216.7" font-family="Liberation Mono" font-size="11.19" fill="#D4D4D4" stroke="#D4D4D4" stroke-width="0.55" textLength="5.2" lengthAdjust="spacingAndGlyphs" transform="rotate(-90 481.6 216.7)">2</text>
<text x="476.3" y="228.2" font-family="Liberation Mono" font-size="11.19" fill="#D4D4D4" stroke="#D4D4D4" stroke-width="0.55" textLength="5.2" lengthAdjust="spacingAndGlyphs" transform="rotate(-90 476.3 228.2)">1</text>
<text x="469.1" y="272" font-family="Liberation Mono" font-size="12.84" fill="#D4D4D4" stroke="#D4D4D4" stroke-width="0.55" textLength="34.9" lengthAdjust="spacingAndGlyphs" transform="rotate(-90 469.1 272)">BC236</text>
<text x="481.1" y="250" font-family="Liberation Mono" font-size="12.84" fill="#D4D4D4" stroke="#D4D4D4" stroke-width="0.55" textLength="14.3" lengthAdjust="spacingAndGlyphs" transform="rotate(-90 481.1 250)">Q1</text>
<line x1="288.6" y1="320" x2="288.6" y2="384.3" stroke="#C0C0C0" stroke-width="6"/>
<path d="M281 338H297V364.5H281Z" fill="#000" stroke="#D4D4D4" stroke-width="1.3"/>
<path d="M281 342H297M283 357H295M289 344V362M284 346H294L289 356Z" fill="none" stroke="#D4D4D4" stroke-width="1"/>
<circle cx="288.6" cy="320" r="4.5" fill="none" stroke="#1AAE1A" stroke-width="1.8"/>
<circle cx="288.6" cy="384.3" r="4.5" fill="none" stroke="#1AAE1A" stroke-width="1.8"/>
<circle cx="288.6" cy="384.3" r="2" fill="#C040C0"/>
<text x="279.8" y="385.4" font-family="Liberation Mono" font-size="11.64" fill="#D4D4D4" stroke="#D4D4D4" stroke-width="0.55" textLength="44.4" lengthAdjust="spacingAndGlyphs" transform="rotate(-90 279.8 385.4)">1N4004</text>
<text x="308.7" y="354" font-family="Liberation Mono" font-size="11.64" fill="#D4D4D4" stroke="#D4D4D4" stroke-width="0.55" textLength="13" lengthAdjust="spacingAndGlyphs" transform="rotate(-90 308.7 354)">D1</text>
<text x="316.6" y="409.3" font-family="Liberation Mono" font-size="16.27" fill="#D4D4D4" stroke="#D4D4D4" stroke-width="0.6" textLength="19" lengthAdjust="spacingAndGlyphs" transform="rotate(-90 316.6 409.3)">K1</text>
<rect x="321" y="278.3" width="179" height="131.5" rx="4" fill="none" stroke="#D4D4D4" stroke-width="1.3"/>
<path d="M357.55 277.25H367.05L373.05 283.25V312.75L367.05 318.75H357.55L351.55 312.75V283.25Z" fill="#1AAE1A"/>
<path d="M357.95 368.25H367.45L373.45 374.25V403.75L367.45 409.75H357.95L351.95 403.75V374.25Z" fill="#30F030"/>
<path d="M403.65 290.95H413.15L419.15 296.95V326.45L413.15 332.45H403.65L397.65 326.45V296.95Z" fill="#1AAE1A"/>
<path d="M403.65 354.95H413.15L419.15 360.95V390.45L413.15 396.45H403.65L397.65 390.45V360.95Z" fill="#30F030"/>
<path d="M441.55 290.95H451.05L457.05 296.95V326.45L451.05 332.45H441.55L435.55 326.45V296.95Z" fill="#1AAE1A"/>
<path d="M441.55 354.95H451.05L457.05 360.95V390.45L451.05 396.45H441.55L435.55 390.45V360.95Z" fill="#1AAE1A"/>
<path d="M471.75 290.95H481.25L487.25 296.95V326.45L481.25 332.45H471.75L465.75 326.45V296.95Z" fill="#1AAE1A"/>
<path d="M471.75 354.95H481.25L487.25 360.95V390.45L481.25 396.45H471.75L465.75 390.45V360.95Z" fill="#1AAE1A"/>
<circle cx="362.4" cy="297.9" r="5.9" fill="#000"/>
<circle cx="362.7" cy="389" r="5.9" fill="#000"/>
<circle cx="408.4" cy="311.7" r="5.9" fill="#000"/>
<circle cx="408.4" cy="375.7" r="5.9" fill="#000"/>
<circle cx="446.3" cy="311.7" r="5.9" fill="#000"/>
<circle cx="446.3" cy="375.7" r="5.9" fill="#000"/>
<circle cx="476.5" cy="311.7" r="5.9" fill="#000"/>
<circle cx="476.5" cy="375.7" r="5.9" fill="#000"/>
<circle cx="90" cy="400" r="1.8" fill="#C040C0"/>
<path d="M356 389.5L369 388.5M402 377.5L414 374.5" stroke="#D02828" stroke-width="1"/>
<path d="M362.3 318.9V334.7M362.3 351.3V369M349.2 334.7H375V351.3H349.2ZM352 349L372 337" fill="none" stroke="#D4D4D4" stroke-width="1.3"/>
<path d="M408.4 291.6V283H460.7L469.3 291.6H476M447.8 294V291.6H456" fill="none" stroke="#D4D4D4" stroke-width="1.3"/>
<path d="M408.4 396.4V405H460.7L469.3 396.4H476M447.8 394V396.4H456" fill="none" stroke="#D4D4D4" stroke-width="1.3"/>
<text x="342.4" y="393" font-family="Liberation Mono" font-size="19.40" fill="#D4D4D4" stroke="#D4D4D4" stroke-width="0.6" textLength="40.6" lengthAdjust="spacingAndGlyphs" transform="rotate(-90 342.4 393)">LY20</text>
</g>
<line x1="96.8" y1="454" x2="91.90" y2="413.90" stroke="#0A14F0" stroke-width="6" stroke-linecap="round"/>
<path d="M90.20 400.00L95.87 413.41L87.93 414.38Z" fill="#0A14F0"/>
<line x1="305.4" y1="456" x2="294.59" y2="408.21" stroke="#0A14F0" stroke-width="6" stroke-linecap="round"/>
<path d="M289.30 384.80L298.74 407.27L290.45 409.15Z" fill="#0A14F0"/>
<line x1="382" y1="435" x2="368.70" y2="403.87" stroke="#0A14F0" stroke-width="6" stroke-linecap="round"/>
<path d="M363.20 391.00L372.84 402.11L364.56 405.64Z" fill="#0A14F0"/>
<line x1="436.8" y1="434" x2="415.15" y2="391.84" stroke="#0A14F0" stroke-width="6" stroke-linecap="round"/>
<path d="M408.30 378.50L419.16 389.79L411.15 393.90Z" fill="#0A14F0"/>
<line x1="386" y1="279.6" x2="369.64" y2="250.99" stroke="#0A14F0" stroke-width="7" stroke-linecap="round"/>
<path d="M361.70 237.10L373.98 248.51L365.30 253.47Z" fill="#0A14F0"/>
<line x1="442" y1="266" x2="458.87" y2="237.38" stroke="#0A14F0" stroke-width="7.5" stroke-linecap="round"/>
<path d="M467.00 223.60L463.61 240.18L454.14 234.59Z" fill="#0A14F0"/>
<line x1="52.5" y1="101" x2="47.71" y2="81.37" stroke="#F2F21A" stroke-width="5.5" stroke-linecap="round"/>
<path d="M42.50 60.00L54.03 79.83L41.40 82.91Z" fill="#F2F21A"/>
<line x1="111.7" y1="112" x2="110.64" y2="81.99" stroke="#22D622" stroke-width="5.5" stroke-linecap="round"/>
<path d="M110.00 64.00L117.13 81.76L104.14 82.22Z" fill="#22D622"/>
<line x1="52.3" y1="287.6" x2="25.19" y2="261.32" stroke="#E81E44" stroke-width="6" stroke-linecap="round"/>
<path d="M9.40 246.00L30.07 256.29L20.32 266.34Z" fill="#E81E44"/>
</svg>
</body></html>
